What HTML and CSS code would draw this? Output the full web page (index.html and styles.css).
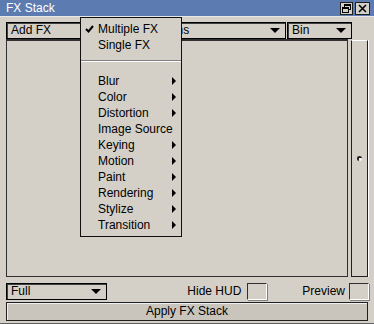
FILE: index.html
```html
<!DOCTYPE html>
<html>
<head>
<meta charset="utf-8">
<link rel="stylesheet" href="styles.css">
</head>
<body>
<div class="win">
  <div class="titlebar">
    <span class="title">FX Stack</span>
    <div class="tbtns">
      <span class="tbtn"><svg width="11" height="11" viewBox="0 0 11 11"><rect x="3.5" y="1.5" width="6" height="5" fill="none" stroke="#000"/><rect x="3" y="1" width="7" height="2" fill="#000"/><rect x="1.5" y="4.5" width="6" height="5" fill="#d4d0c8" stroke="#000"/><rect x="1" y="4" width="7" height="2" fill="#000"/></svg></span>
      <span class="tbtn"><svg width="11" height="11" viewBox="0 0 11 11"><path d="M2 2 L9 9 M9 2 L2 9" stroke="#000" stroke-width="1.6"/></svg></span>
    </div>
  </div>
  <div class="content">
    <div class="toolbar">
      <div class="dd dd-add"><span>Add FX</span></div>
      <div class="dd dd-cat"><span>Transitions</span><i class="arrow"></i></div>
      <div class="dd dd-bin"><span>Bin</span><i class="arrow"></i></div>
    </div>
    <div class="main">
      <div class="panel"></div>
      <div class="scroll"><span class="knob"></span></div>
    </div>
    <div class="bottom">
      <div class="dd dd-full"><span>Full</span><i class="arrow"></i></div>
      <div class="spacer"></div>
      <span class="lbl">Hide HUD</span><span class="cb"></span>
      <span class="lbl lbl-prev">Preview</span><span class="cb"></span>
    </div>
    <div class="apply">Apply FX Stack</div>
  </div>
  <div class="menu">
    <div class="item"><svg class="check" width="9" height="8" viewBox="0 0 9 8"><path d="M1 4 L3.5 6.5 L8 1" fill="none" stroke="#000" stroke-width="2"/></svg>Multiple FX</div>
    <div class="item">Single FX</div>
    <div class="sep"></div>
    <div class="item sub">Blur</div>
    <div class="item sub">Color</div>
    <div class="item sub">Distortion</div>
    <div class="item">Image Source</div>
    <div class="item sub">Keying</div>
    <div class="item sub">Motion</div>
    <div class="item sub">Paint</div>
    <div class="item sub">Rendering</div>
    <div class="item sub">Stylize</div>
    <div class="item sub">Transition</div>
  </div>
</div>
</body>
</html>
```

FILE: styles.css
```css
* { box-sizing: border-box; }
html, body { margin: 0; padding: 0; }
body {
  background: #d4d0c8;
  font-family: "Liberation Sans", Arial, sans-serif;
  font-size: 12px;
  color: #000;
}
.win {
  position: relative;
  width: 374px;
  height: 324px;
  background: #d4d0c8;
  border-bottom: 1px solid #606060;
  overflow: hidden;
}
.titlebar {
  height: 17px;
  background: #5b7bb1;
  border-bottom: 1px solid #e8e8e8;
  display: flex;
  align-items: center;
  justify-content: space-between;
  padding: 0 4px 0 6px;
}
.title {
  color: #fff;
  font-size: 12px;
  line-height: 16px;
}
.tbtns {
  display: flex;
  gap: 2px;
  margin-top: 1px;
}
.tbtn {
  width: 13px;
  height: 13px;
  background: #d4d0c8;
  border: 1px solid #202020;
  display: flex;
  align-items: center;
  justify-content: center;
}
.tbtn:last-child { width: 15px; }
.content {
  padding: 5px 5px 0 6px;
}
.toolbar {
  display: flex;
  gap: 1px;
  height: 17px;
}
.dd {
  position: relative;
  height: 17px;
  border: 1px solid #000;
  box-shadow: inset 1px 1px 0 #404040;
  line-height: 15px;
  padding-left: 4px;
  background: #d4d0c8;
}
.dd-add { width: 115px; }
.dd-cat { width: 164px; padding-left: 8px; }
.dd-bin { width: 65px; }
.dd-full { width: 101px; }
.arrow {
  position: absolute;
  right: 5px;
  top: 5px;
  width: 0;
  height: 0;
  border-left: 5px solid transparent;
  border-right: 5px solid transparent;
  border-top: 5px solid #000;
}
.main {
  display: flex;
  gap: 3px;
  height: 238px;
  margin-top: 0;
}
.panel {
  width: 342px;
  height: 238px;
  border: 1px solid #303030;
  border-top-width: 2px;
}
.scroll {
  position: relative;
  width: 17px;
  height: 237px;
  margin-top: 1px;
  border: 1px solid #202020;
  border-top-color: #ffffff;
  box-shadow: 1px 0 0 #ffffff;
}
.knob {
  position: absolute;
  left: 5px;
  top: 115px;
  width: 5px;
  height: 5px;
  border-radius: 50%;
  background: #fff;
  border-top: 2px solid #202020;
  border-left: 2px solid #202020;
}
.bottom {
  display: flex;
  align-items: center;
  height: 17px;
  margin-top: 6px;
}
.spacer { flex: 1; }
.lbl {
  line-height: 17px;
  margin-right: 6px;
}
.lbl-prev { margin-left: 35px; margin-right: 4px; }
.cb {
  width: 20px;
  height: 17px;
  border: 1px solid #303030;
  border-right-color: #ffffff;
  border-bottom-color: #ffffff;
  box-shadow: 1px 1px 0 #808080;
}
.apply {
  width: 362px;
  height: 19px;
  margin-top: 2px;
  border: 1px solid #202020;
  box-shadow: inset 1px 1px 0 #f0f0f0;
  background: #c9c5bd;
  text-align: center;
  line-height: 17px;
}
.menu {
  position: absolute;
  left: 80px;
  top: 17px;
  width: 102px;
  height: 220px;
  background: #d4d0c8;
  border: 1px solid #101010;
  padding: 3px 0 2px 0;
}
.item {
  position: relative;
  height: 16px;
  line-height: 16px;
  padding-left: 17px;
  white-space: nowrap;
}
.item .check {
  position: absolute;
  left: 4px;
  top: 4px;
}
.sub::after {
  content: "";
  position: absolute;
  right: 5px;
  top: 4px;
  width: 0;
  height: 0;
  border-top: 4px solid transparent;
  border-bottom: 4px solid transparent;
  border-left: 4px solid #000;
}
.sep {
  height: 20px;
  position: relative;
}
.sep::before {
  content: "";
  position: absolute;
  left: 0;
  right: 0;
  top: 7px;
  height: 1px;
  background: #808080;
  box-shadow: 0 1px 0 #ffffff;
}
```
